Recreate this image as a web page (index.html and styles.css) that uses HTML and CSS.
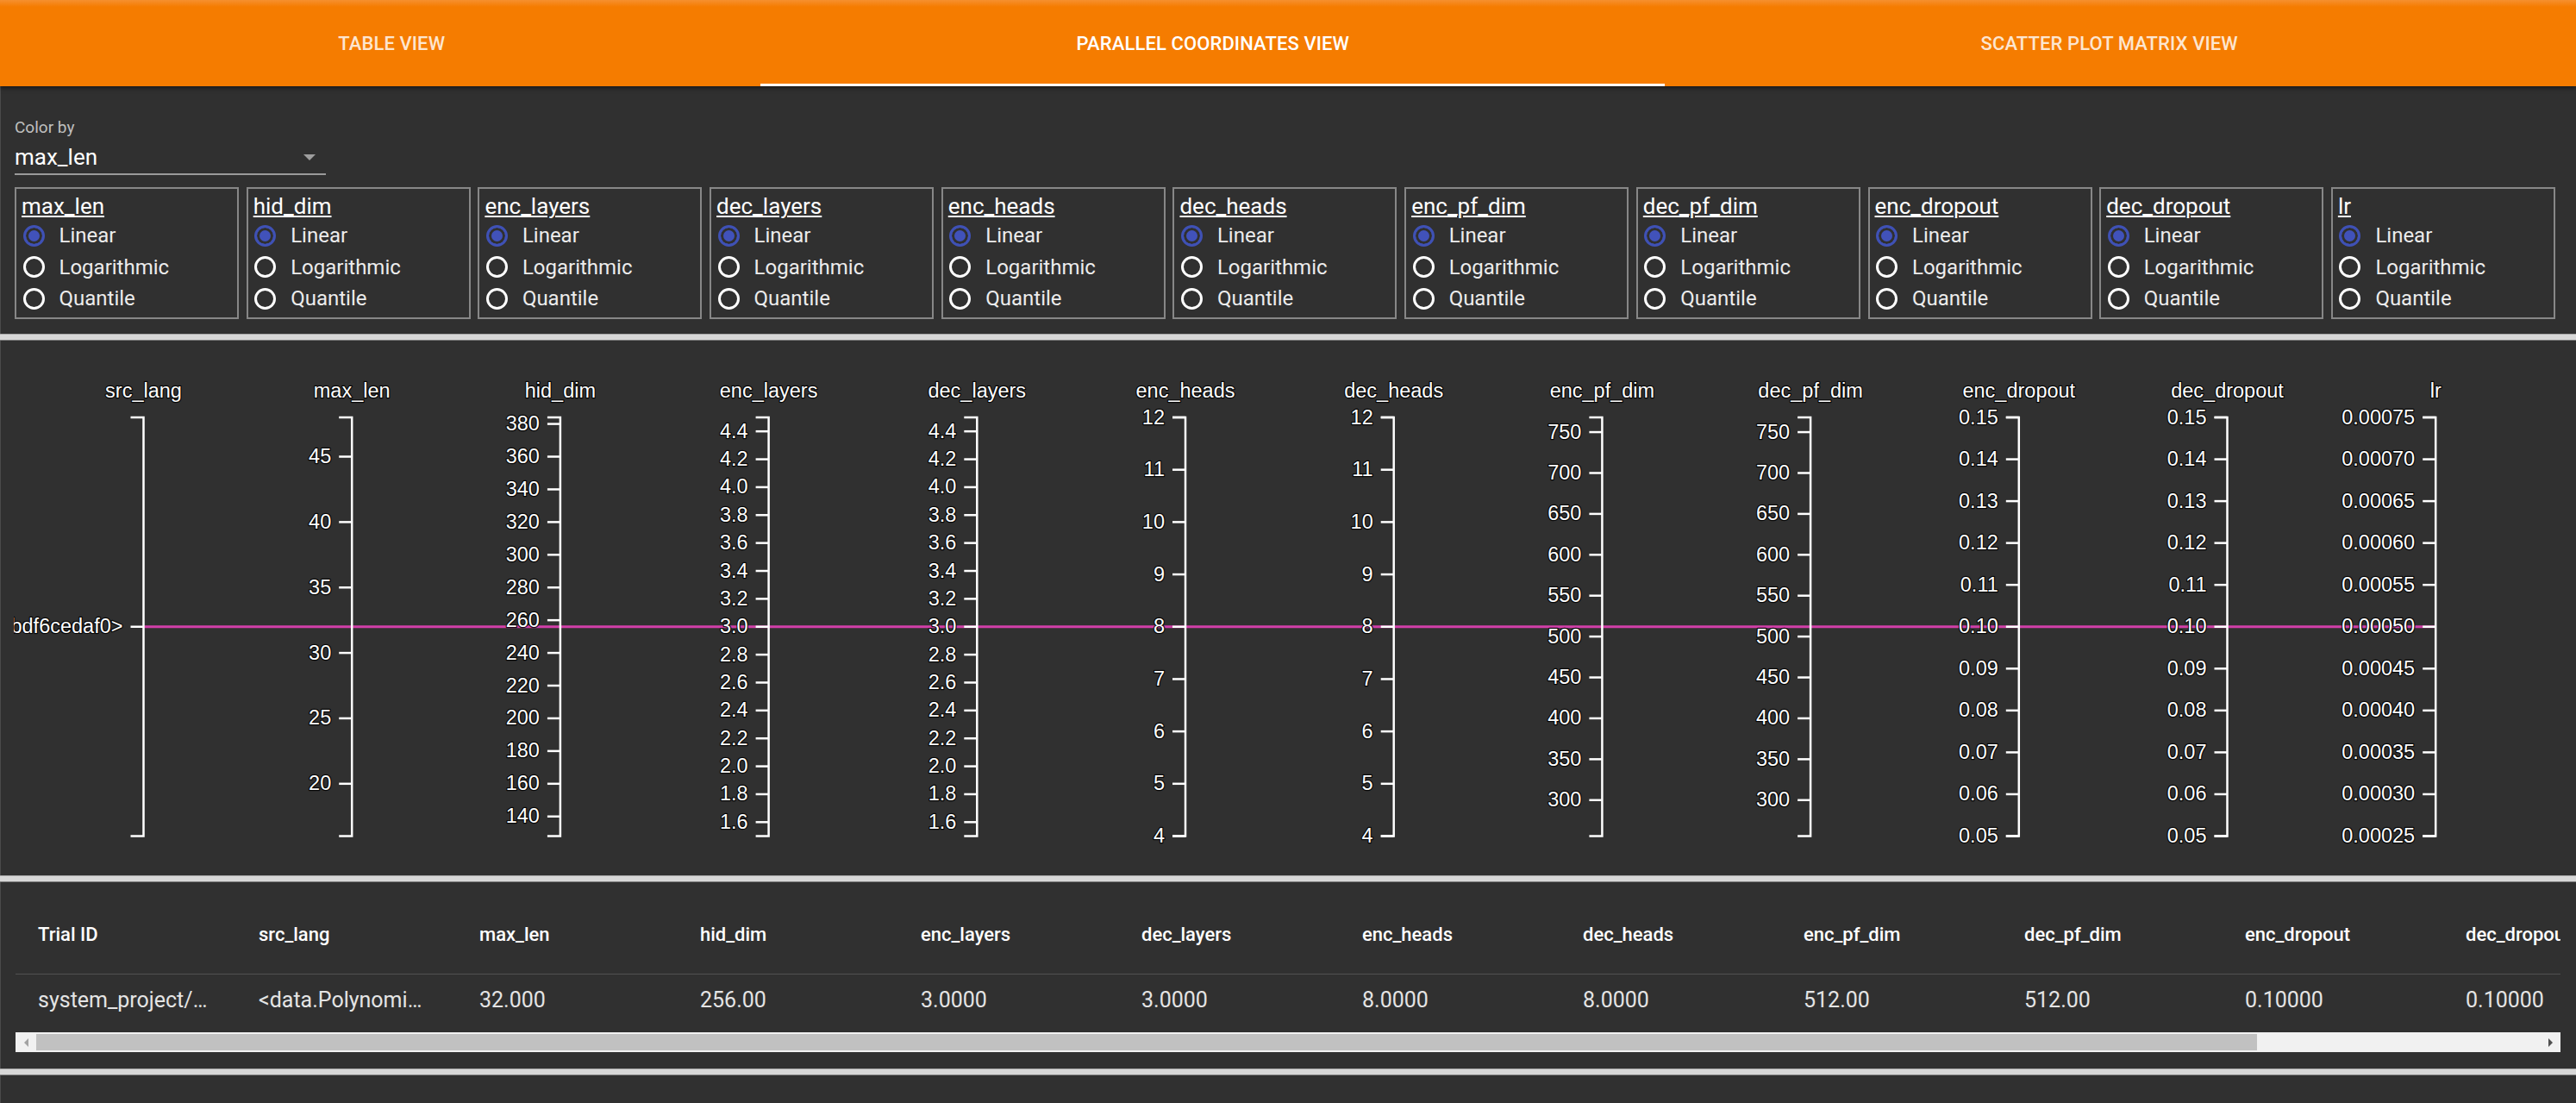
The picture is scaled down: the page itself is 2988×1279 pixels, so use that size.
FILE: index.html
```html
<!DOCTYPE html>
<html lang="en">
<head>
<meta charset="utf-8">
<title>Parallel Coordinates View</title>
<link rel="stylesheet" href="styles.css">
</head>
<body>
<header class="tabs">
  <div class="tab">TABLE VIEW</div>
  <div class="tab tab--active">PARALLEL COORDINATES VIEW</div>
  <div class="tab">SCATTER PLOT MATRIX VIEW</div>
</header>

<section class="panel panel--controls">
  <div class="colorby">
    <div class="colorby__label">Color by</div>
    <div class="colorby__select"><span>max_len</span><span class="colorby__arrow"></span></div>
  </div>
  <div class="scales">
    <div class="scale"><div class="scale__title">max_len</div><div class="opt"><span class="radio radio--on"></span>Linear</div><div class="opt"><span class="radio"></span>Logarithmic</div><div class="opt"><span class="radio"></span>Quantile</div></div>
    <div class="scale"><div class="scale__title">hid_dim</div><div class="opt"><span class="radio radio--on"></span>Linear</div><div class="opt"><span class="radio"></span>Logarithmic</div><div class="opt"><span class="radio"></span>Quantile</div></div>
    <div class="scale"><div class="scale__title">enc_layers</div><div class="opt"><span class="radio radio--on"></span>Linear</div><div class="opt"><span class="radio"></span>Logarithmic</div><div class="opt"><span class="radio"></span>Quantile</div></div>
    <div class="scale"><div class="scale__title">dec_layers</div><div class="opt"><span class="radio radio--on"></span>Linear</div><div class="opt"><span class="radio"></span>Logarithmic</div><div class="opt"><span class="radio"></span>Quantile</div></div>
    <div class="scale"><div class="scale__title">enc_heads</div><div class="opt"><span class="radio radio--on"></span>Linear</div><div class="opt"><span class="radio"></span>Logarithmic</div><div class="opt"><span class="radio"></span>Quantile</div></div>
    <div class="scale"><div class="scale__title">dec_heads</div><div class="opt"><span class="radio radio--on"></span>Linear</div><div class="opt"><span class="radio"></span>Logarithmic</div><div class="opt"><span class="radio"></span>Quantile</div></div>
    <div class="scale"><div class="scale__title">enc_pf_dim</div><div class="opt"><span class="radio radio--on"></span>Linear</div><div class="opt"><span class="radio"></span>Logarithmic</div><div class="opt"><span class="radio"></span>Quantile</div></div>
    <div class="scale"><div class="scale__title">dec_pf_dim</div><div class="opt"><span class="radio radio--on"></span>Linear</div><div class="opt"><span class="radio"></span>Logarithmic</div><div class="opt"><span class="radio"></span>Quantile</div></div>
    <div class="scale"><div class="scale__title">enc_dropout</div><div class="opt"><span class="radio radio--on"></span>Linear</div><div class="opt"><span class="radio"></span>Logarithmic</div><div class="opt"><span class="radio"></span>Quantile</div></div>
    <div class="scale"><div class="scale__title">dec_dropout</div><div class="opt"><span class="radio radio--on"></span>Linear</div><div class="opt"><span class="radio"></span>Logarithmic</div><div class="opt"><span class="radio"></span>Quantile</div></div>
    <div class="scale"><div class="scale__title">lr</div><div class="opt"><span class="radio radio--on"></span>Linear</div><div class="opt"><span class="radio"></span>Logarithmic</div><div class="opt"><span class="radio"></span>Quantile</div></div>
  </div>
</section>

<div class="divider"></div>

<section class="panel panel--chart">
  <svg id="pc" class="pc" width="2956" height="620" viewBox="0 0 2956 620"></svg>
</section>

<div class="divider"></div>

<section class="panel panel--table">
  <div class="tablewrap">
    <table class="trials">
      <thead>
        <tr>
          <th>Trial ID</th><th>src_lang</th><th>max_len</th><th>hid_dim</th><th>enc_layers</th><th>dec_layers</th><th>enc_heads</th><th>dec_heads</th><th>enc_pf_dim</th><th>dec_pf_dim</th><th>enc_dropout</th><th>dec_dropout</th><th>lr</th>
        </tr>
      </thead>
      <tbody>
        <tr>
          <td>system_project/main_trial_0</td><td>&lt;data.PolynomialLanguage object at 0x7fbdf6cedaf0&gt;</td><td>32.000</td><td>256.00</td><td>3.0000</td><td>3.0000</td><td>8.0000</td><td>8.0000</td><td>512.00</td><td>512.00</td><td>0.10000</td><td>0.10000</td><td>0.00050000</td>
        </tr>
      </tbody>
    </table>
  </div>
  <div class="hscroll">
    <div class="hscroll__btn"><span class="arrow arrow--left"></span></div>
    <div class="hscroll__thumb"></div>
    <div class="hscroll__rest"></div>
    <div class="hscroll__btn"><span class="arrow arrow--right"></span></div>
  </div>
</section>

<div class="divider"></div>

<section class="panel panel--empty"></section>

<script src="script.js"></script>
</body>
</html>
```

FILE: styles.css
```css
html, body {
  margin: 0;
  padding: 0;
}
body {
  width: 2988px;
  height: 1279px;
  overflow: hidden;
  background: #303030;
  font-family: Roboto, "Noto Sans", "Liberation Sans", sans-serif;
  color: #fff;
}

/* ---------- tabs ---------- */
.tabs {
  position: relative;
  z-index: 1;
  display: flex;
  height: 100px;
  padding: 0 26px;
  background: linear-gradient(#f6902f 0, #f57c00 8px, #f57c00 100%);
  box-shadow: 0 2px 5px rgba(0, 0, 0, 0.55);
}
.tab {
  flex: 1 1 auto;
  display: flex;
  align-items: center;
  justify-content: center;
  box-sizing: border-box;
  font-size: 22px;
  font-weight: 500;
  letter-spacing: 0.1px;
  color: rgba(255, 255, 255, 0.82);
  white-space: nowrap;
}
.tab--active {
  color: #fff;
  border-bottom: 3px solid #fff;
  padding-top: 3px;
}

/* ---------- panels ---------- */
.panel {
  box-sizing: border-box;
  background: #303030;
  border-left: 1px solid #4a4a4a;
}
.divider {
  box-sizing: border-box;
  height: 8px;
  background: #d7d7d7;
  border-top: 1px solid #a8a8a8;
  border-bottom: 1px solid #7c7c7c;
}

/* ---------- controls ---------- */
.panel--controls {
  height: 287px;
  padding: 36px 0 0 16px;
}
.colorby__label {
  font-size: 19px;
  line-height: 24px;
  color: rgba(255, 255, 255, 0.7);
}
.colorby__select {
  display: flex;
  align-items: center;
  justify-content: space-between;
  width: 361px;
  height: 34px;
  margin-top: 5px;
  padding-bottom: 2px;
  font-size: 26px;
  line-height: 34px;
  color: #fff;
  border-bottom: 2px solid #9a9a9a;
}
.colorby__arrow {
  width: 0;
  height: 0;
  margin-right: 12px;
  border-left: 7px solid transparent;
  border-right: 7px solid transparent;
  border-top: 7px solid #9e9e9e;
}
.scales {
  display: flex;
  gap: 8.7px;
  margin-top: 14px;
}
.scale {
  box-sizing: border-box;
  width: 260px;
  height: 152.5px;
  padding: 4px 6px 3px;
  border: 2px solid #878787;
}
.scale__title {
  font-size: 26px;
  line-height: 32px;
  text-decoration: underline;
  text-decoration-thickness: 1.5px;
  text-underline-offset: 2px;
  color: #fff;
}
.opt {
  display: flex;
  align-items: center;
  height: 36.5px;
  font-size: 24px;
  color: #ececec;
}
.radio {
  box-sizing: border-box;
  flex: none;
  width: 25px;
  height: 25px;
  margin: 0 17px 0 1.5px;
  border: 3px solid #fff;
  border-radius: 50%;
}
.radio--on {
  border-color: #3f51b5;
  background: #4152ba;
  box-shadow: inset 0 0 0 3px #303030;
}

/* ---------- chart ---------- */
.panel--chart {
  height: 620px;
  padding-left: 15px;
}
.pc {
  display: block;
}
.pc-line {
  fill: none;
  stroke: #d23fa9;
  stroke-width: 3;
}
.pc-domain {
  fill: none;
  stroke: #fff;
  stroke-width: 2.5;
}
.pc-tick {
  stroke: #fff;
  stroke-width: 2.5;
}
.pc-label,
.pc-title {
  font-family: "Liberation Sans", Arial, sans-serif;
  font-size: 23.5px;
  fill: #fff;
  stroke: rgba(0, 0, 0, 0.85);
  stroke-width: 2.5px;
  stroke-linejoin: round;
  paint-order: stroke;
}
.pc-label {
  text-anchor: end;
}
.pc-title {
  text-anchor: middle;
}

/* ---------- table ---------- */
.panel--table {
  height: 216px;
  padding: 16px 0 0 17px;
}
.tablewrap {
  width: 2952px;
  overflow: hidden;
}
.trials {
  table-layout: fixed;
  width: 3328px;
  border-collapse: collapse;
}
.trials th,
.trials td {
  width: 256px;
  box-sizing: border-box;
  padding: 0 28px 0 26px;
  text-align: left;
  white-space: nowrap;
  overflow: hidden;
  text-overflow: ellipsis;
}
.trials th {
  height: 90px;
  font-size: 22px;
  font-weight: 500;
  color: #fff;
  border-bottom: 1px solid #515151;
}
.trials td {
  height: 60px;
  font-size: 25px;
  font-weight: 400;
  color: #e4e4e4;
}
.hscroll {
  display: flex;
  width: 2952px;
  height: 23px;
  margin-top: 8px;
  background: #f1f1f1;
}
.hscroll__btn {
  flex: none;
  width: 24px;
  display: flex;
  align-items: center;
  justify-content: center;
}
.hscroll__thumb {
  flex: none;
  width: 2576px;
  margin: 2px 0;
  background: #c1c1c1;
}
.hscroll__rest {
  flex: 1;
}
.arrow {
  width: 0;
  height: 0;
  border-top: 5px solid transparent;
  border-bottom: 5px solid transparent;
}
.arrow--left {
  border-right: 5px solid #a3a3a3;
}
.arrow--right {
  border-left: 5px solid #505050;
}

.panel--empty {
  height: 33px;
}
```

FILE: script.js
```js
(function () {
  var NS = 'http://www.w3.org/2000/svg';
  var svg = document.getElementById('pc');
  var TOP = 89, BOT = 574.5, X0 = 150.5, DX = 241.7;
  var MID = (TOP + BOT) / 2;

  function el(tag, attrs, parent, text) {
    var e = document.createElementNS(NS, tag);
    for (var k in attrs) e.setAttribute(k, attrs[k]);
    if (text != null) e.textContent = text;
    parent.appendChild(e);
    return e;
  }
  function lin(name, min, max, start, step, count, dec) {
    var t = [];
    for (var i = 0; i < count; i++) {
      var v = start + step * i;
      t.push({ v: v, label: v.toFixed(dec) });
    }
    return { name: name, min: min, max: max, ticks: t };
  }

  var axes = [
    { name: 'src_lang', cat: '<data.PolynomialLanguage object at 0x7fbdf6cedaf0>' },
    lin('max_len', 16, 48, 20, 5, 6, 0),
    lin('hid_dim', 128, 384, 140, 20, 13, 0),
    lin('enc_layers', 1.5, 4.5, 1.6, 0.2, 15, 1),
    lin('dec_layers', 1.5, 4.5, 1.6, 0.2, 15, 1),
    lin('enc_heads', 4, 12, 4, 1, 9, 0),
    lin('dec_heads', 4, 12, 4, 1, 9, 0),
    lin('enc_pf_dim', 256, 768, 300, 50, 10, 0),
    lin('dec_pf_dim', 256, 768, 300, 50, 10, 0),
    lin('enc_dropout', 0.05, 0.15, 0.05, 0.01, 11, 2),
    lin('dec_dropout', 0.05, 0.15, 0.05, 0.01, 11, 2),
    lin('lr', 0.00025, 0.00075, 0.00025, 0.00005, 11, 5)
  ];

  var pts = axes.map(function (a, i) { return (X0 + DX * i).toFixed(1) + ',' + MID; });
  el('polyline', { points: pts.join(' '), 'class': 'pc-line' }, svg);

  axes.forEach(function (a, i) {
    var g = el('g', { transform: 'translate(' + (X0 + DX * i).toFixed(1) + ',0)', 'class': 'pc-axis' }, svg);
    el('path', { d: 'M-15,' + TOP + 'H0V' + BOT + 'H-15', 'class': 'pc-domain' }, g);
    var ticks = a.cat
      ? [{ y: MID, label: a.cat }]
      : a.ticks.map(function (t) {
          return { y: TOP + (a.max - t.v) / (a.max - a.min) * (BOT - TOP), label: t.label };
        });
    ticks.forEach(function (t) {
      el('line', { x1: -15, x2: 0, y1: t.y, y2: t.y, 'class': 'pc-tick' }, g);
      el('text', { x: -24, y: t.y, dy: '0.32em', 'class': 'pc-label' }, g, t.label);
    });
    el('text', { x: 0, y: 66, 'class': 'pc-title' }, g, a.name);
  });
})();
```
